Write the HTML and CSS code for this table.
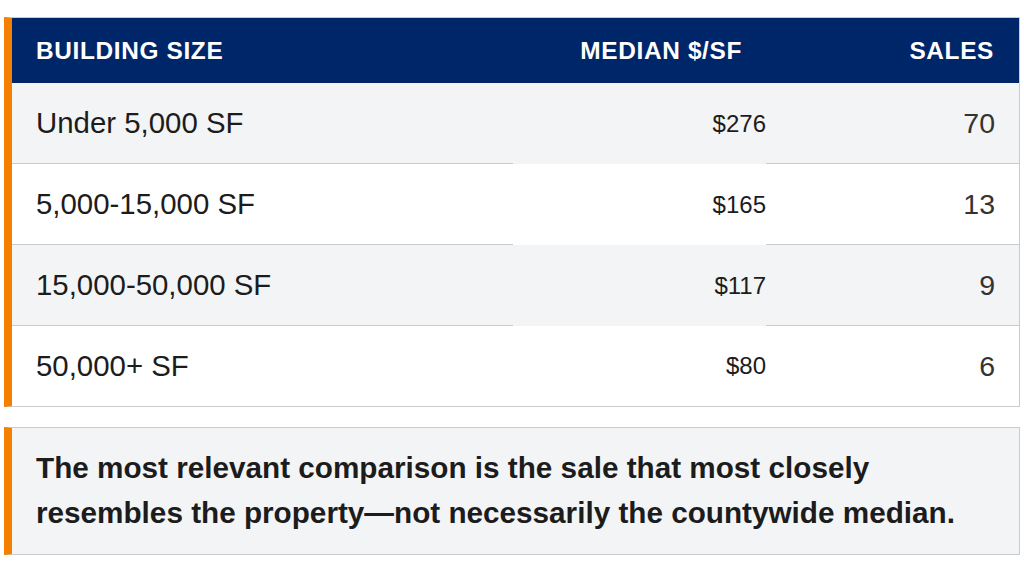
FILE: index.html
```html
<!DOCTYPE html>
<html lang="en">
<head>
<meta charset="utf-8">
<title>Building size sales</title>
<link rel="stylesheet" href="styles.css">
</head>
<body>
<div class="page">
  <div class="table-wrap">
    <table class="sales-table">
      <colgroup>
        <col class="c-size">
        <col class="c-median">
        <col class="c-sales">
      </colgroup>
      <thead>
        <tr>
          <th class="th-left">BUILDING SIZE</th>
          <th class="th-right">MEDIAN $/SF</th>
          <th class="th-right">SALES</th>
        </tr>
      </thead>
      <tbody>
        <tr class="alt">
          <td class="size">Under 5,000 SF</td>
          <td class="median">$276</td>
          <td class="count">70</td>
        </tr>
        <tr>
          <td class="size">5,000-15,000 SF</td>
          <td class="median">$165</td>
          <td class="count">13</td>
        </tr>
        <tr class="alt">
          <td class="size">15,000-50,000 SF</td>
          <td class="median">$117</td>
          <td class="count">9</td>
        </tr>
        <tr class="last">
          <td class="size">50,000+ SF</td>
          <td class="median">$80</td>
          <td class="count">6</td>
        </tr>
      </tbody>
    </table>
  </div>
  <div class="callout">
    <p>The most relevant comparison is the sale that most closely resembles the property—not necessarily the countywide median.</p>
  </div>
</div>
</body>
</html>
```
FILE: styles.css
```css
html, body {
  margin: 0;
  padding: 0;
  background: #ffffff;
}

body {
  font-family: "Liberation Sans", Arial, sans-serif;
  color: #1c1c1c;
}

.page {
  padding: 17px 4px 0 4px;
  display: flex;
  flex-direction: column;
  gap: 20px;
}

.table-wrap {
  border: 1px solid #c9cbce;
  border-left: 8px solid #f57f00;
  background: #ffffff;
}

.sales-table {
  width: 100%;
  border-collapse: separate;
  border-spacing: 0;
  table-layout: fixed;
}

.c-size { width: 501px; }
.c-median { width: 253px; }
.c-sales { width: 253px; }

.sales-table th {
  background: #00266a;
  color: #ffffff;
  font-size: 24.4px;
  font-weight: 700;
  letter-spacing: 0.65px;
  line-height: 27px;
  padding: 19px 24px;
}

.th-left { text-align: left; }
.th-right { text-align: right; }

.sales-table th.th-right:last-child {
  padding-right: 25px;
}

.sales-table td {
  height: 80px;
  padding: 0 24px;
  vertical-align: middle;
  border-bottom: 1px solid #c9cbce;
  background: #ffffff;
}

.sales-table tr.alt td {
  background: #f3f4f6;
}

.sales-table tr.last td {
  border-bottom: none;
}

.sales-table td.size {
  font-size: 29.4px;
  color: #1c1c1c;
}

.sales-table td.median {
  border-bottom: none;
  padding-right: 0;
  text-align: right;
  font-size: 24px;
  color: #1c1c1c;
}

.sales-table td.count {
  text-align: right;
  font-size: 28.5px;
  color: #333333;
}

.callout {
  border: 1px solid #c9cbce;
  border-left: 8px solid #f57f00;
  background: #f3f4f6;
  padding: 18px 24px 19px 24px;
}

.callout p {
  margin: 0;
  font-size: 29.7px;
  font-weight: 700;
  line-height: 44.5px;
  color: #1c1c1c;
}
```
